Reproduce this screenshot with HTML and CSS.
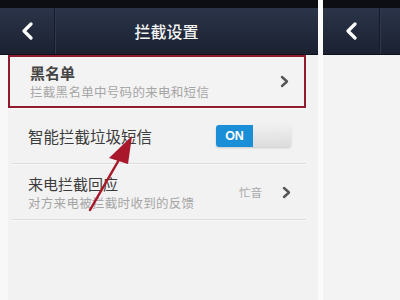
FILE: index.html
```html
<!DOCTYPE html>
<html>
<head>
<meta charset="utf-8">
<link rel="stylesheet" href="styles.css">
</head>
<body>
<div class="stage">
  <div class="screen main">
    <div class="status"></div>
    <div class="header">
      <div class="back"><svg width="14" height="18" viewBox="0 0 14 18"><path d="M11 2 L4 9 L11 16" fill="none" stroke="#fff" stroke-width="3.2" stroke-linecap="round" stroke-linejoin="round"/></svg></div>
      <div class="title">拦截设置</div>
    </div>
    <div class="body">
      <div class="row highlight">
        <div class="texts">
          <div class="label bold">黑名单</div>
          <div class="sub">拦截黑名单中号码的来电和短信</div>
        </div>
        <div class="chev"><svg width="9" height="13" viewBox="0 0 9 13"><path d="M2 2 L7 6.5 L2 11" fill="none" stroke="#555" stroke-width="2.4" stroke-linecap="round" stroke-linejoin="round"/></svg></div>
      </div>
      <div class="row single">
        <div class="label">智能拦截垃圾短信</div>
        <div class="toggle"><span class="on">ON</span><span class="off">OFF</span></div>
      </div>
      <div class="row third">
        <div class="texts">
          <div class="label">来电拦截回应</div>
          <div class="sub">对方来电被拦截时收到的反馈</div>
        </div>
        <div class="value">忙音</div>
        <div class="chev"><svg width="9" height="13" viewBox="0 0 9 13"><path d="M2 2 L7 6.5 L2 11" fill="none" stroke="#555" stroke-width="2.4" stroke-linecap="round" stroke-linejoin="round"/></svg></div>
      </div>
    </div>
  </div>
  <div class="gap"></div>
  <div class="screen side">
    <div class="status"></div>
    <div class="header">
      <div class="back"><svg width="14" height="18" viewBox="0 0 14 18"><path d="M11 2 L4 9 L11 16" fill="none" stroke="#fff" stroke-width="3.2" stroke-linecap="round" stroke-linejoin="round"/></svg></div>
    </div>
    <div class="body"></div>
  </div>
  <svg class="arrow" width="80" height="100" viewBox="0 0 80 100">
    <line x1="8" y1="88" x2="38" y2="36" stroke="#a8182a" stroke-width="2.5" stroke-linecap="round"/>
    <polygon points="50,14 27,36 46,42" fill="#a8182a"/>
  </svg>
</div>
</body>
</html>
```
FILE: styles.css
```css
html, body { margin: 0; padding: 0; }
body {
  width: 400px; height: 300px; overflow: hidden;
  font-family: "Noto Sans CJK SC", "Noto Sans", sans-serif;
  background: #f3f3f3;
}
.stage { position: relative; display: flex; width: 400px; height: 300px; }
.screen { display: flex; flex-direction: column; height: 300px; }
.main { width: 318px; }
.gap { width: 5px; background: #fbfbfb; }
.side { flex: 1; }
.status { height: 8px; background: #0c0e14; }
.header {
  height: 46px;
  background: linear-gradient(#2b3449, #1b2131);
  display: flex; align-items: center;
  border-bottom: 1px solid #0e121c;
}
.back {
  width: 54px; height: 46px; display: flex; align-items: center; justify-content: center;
  border-right: 1px solid #151a26;
  box-shadow: 1px 0 0 #2f3850;
}
.side .back { width: 56px; }
.title {
  flex: 1; text-align: center; color: #f4f4f4; font-size: 16px;
  padding-right: 40px; font-weight: 500;
}
.main .body {
  flex: 1; background: #f2f2f2;
  border-left: 8px solid #f8f8f8;
  padding-right: 12px;
}
.side .body { flex: 1; background: #f3f3f3; }
.row {
  display: flex; align-items: center;
  padding-left: 16px; padding-right: 12px;
  border-bottom: 1px solid #dcdcdc;
  box-shadow: 0 1px 0 #fafafa;
  margin-left: 4px;
}
.row.highlight {
  margin-left: 0;
  height: 49px;
  border: 2px solid #8e1c2e;
  padding-left: 20px;
  padding-right: 12px;
  background: #f3f3f3;
}
.row.single { height: 54px; padding-top: 1px; }
.row.third { height: 54px; padding-top: 1px; }
.texts { flex: 1; display: flex; flex-direction: column; }
.label { font-size: 15px; color: #3c3c3c; line-height: 19px; }
.label.bold { font-weight: 700; color: #444; }
.single .label { flex: 1; font-size: 15.5px; }
.sub { font-size: 12.5px; color: #a6a6a6; line-height: 16px; margin-top: 2px; letter-spacing: 0.3px; }
.chev { width: 12px; display: flex; align-items: center; }
.value { font-size: 11.5px; color: #a8a8a8; margin-right: 20px; }
.toggle {
  display: flex; width: 75px; height: 22px; border-radius: 3px; overflow: hidden;
  margin-right: 3px; box-shadow: 0 1px 2px #c8c8c8;
}
.toggle .on {
  width: 37px; background: #1b8ed8; color: #fff; font-family: "Liberation Sans", sans-serif;
  font-size: 12.5px; font-weight: 700; display: flex; align-items: center; justify-content: center;
}
.toggle .off {
  flex: 1; background: linear-gradient(#f0f0f0, #dcdcdc); color: #e8e8e8;
  font-family: "Liberation Sans", sans-serif; font-size: 11px;
  display: flex; align-items: center; justify-content: center;
}
.arrow { position: absolute; left: 82px; top: 122px; }
```
